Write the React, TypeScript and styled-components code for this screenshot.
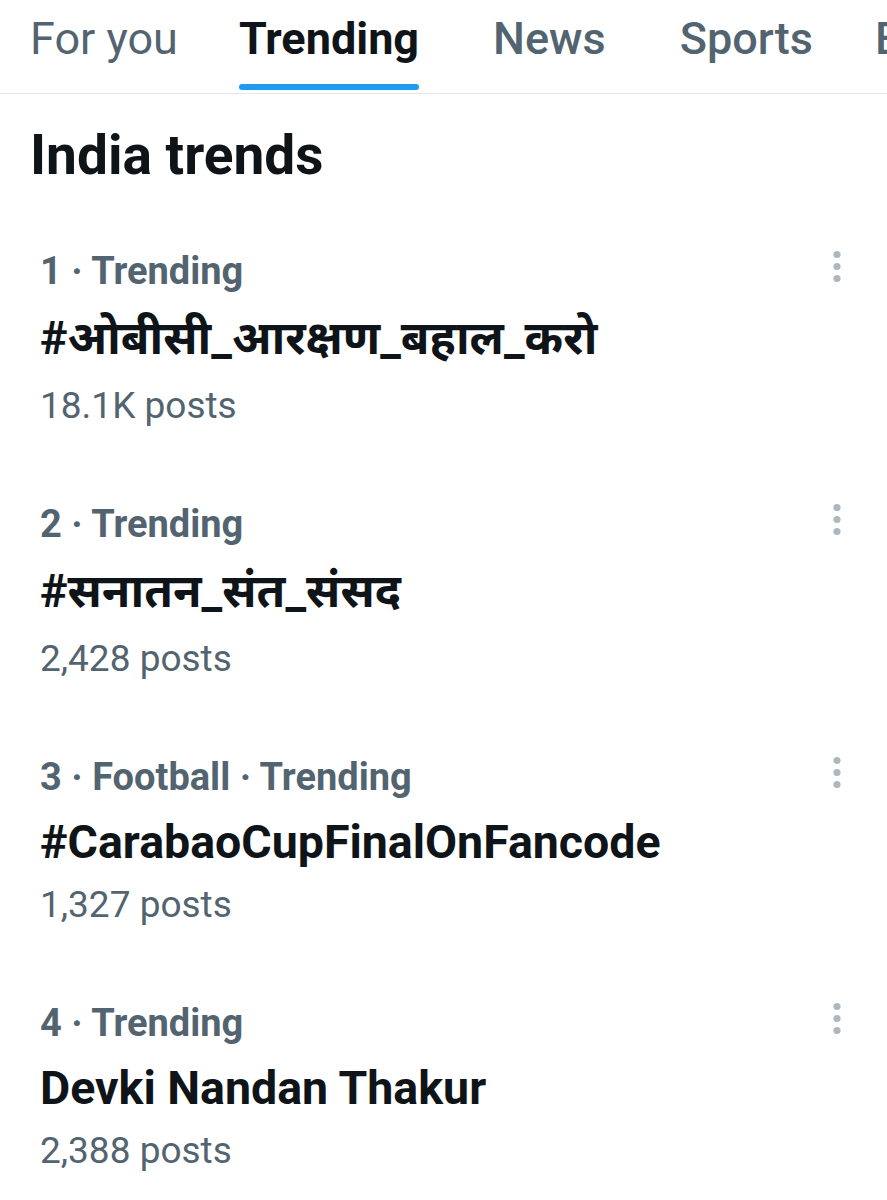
import React from "react";
import styled, { createGlobalStyle } from "styled-components";

const GlobalStyle = createGlobalStyle`
  html, body {
    margin: 0;
    padding: 0;
    background: #ffffff;
  }
  body {
    font-family: Roboto, "Noto Sans Devanagari", "Lohit Devanagari", "FreeSans", "Noto Sans", sans-serif;
    color: #0f1419;
    overflow: hidden;
  }
`;

const Page = styled.div`
  width: 887px;
  height: 1200px;
  background: #ffffff;
  overflow: hidden;
`;

const TabBar = styled.div`
  display: flex;
  padding-left: 30px;
  height: 93px;
  border-bottom: 1px solid #e3e8eb;
  white-space: nowrap;
  overflow: hidden;
`;

const Tab = styled.div<{ $active?: boolean; $weight?: number; $space: number }>`
  display: flex;
  flex-direction: column;
  flex-shrink: 0;
  margin-left: ${({ $space }) => $space}px;
  padding-top: 12px;
  font-size: 45px;
  line-height: 54px;
  font-weight: ${({ $active, $weight }) => ($active ? 700 : $weight ?? 500)};
  color: ${({ $active }) => ($active ? "#0f1419" : "#536471")};
`;

const Underline = styled.div<{ $show?: boolean }>`
  margin-top: 18px;
  height: 6px;
  border-radius: 3px;
  background: ${({ $show }) => ($show ? "#1d9bf0" : "transparent")};
`;

const Heading = styled.h2`
  margin: 29px 0 24px;
  padding-left: 30px;
  font-size: 55px;
  line-height: 64px;
  font-weight: 700;
  color: #0f1419;
`;

const Item = styled.div`
  display: flex;
  align-items: flex-start;
  padding: 36px 38px 35px 40px;
`;

const ItemBody = styled.div`
  flex: 1;
  display: flex;
  flex-direction: column;
`;

const Meta = styled.div`
  font-size: 38px;
  line-height: 48px;
  font-weight: 700;
  color: #536471;
`;

const Title = styled.div<{ $tall?: boolean }>`
  margin: ${({ $tall }) => ($tall ? "15px 0 17px" : "13px 0 12px")};
  font-size: 46.5px;
  line-height: 56px;
  font-weight: 700;
  color: #0f1419;
`;

const Posts = styled.div`
  font-size: 37px;
  line-height: 46px;
  font-weight: 400;
  color: #536471;
`;

const MoreButton = styled.div`
  width: 24px;
  height: 40px;
  flex-shrink: 0;
`;

function MoreIcon() {
  return (
    <svg width="24" height="40" viewBox="0 0 24 40">
      <circle cx="12" cy="7.5" r="3.6" fill="#aeb7bf" />
      <circle cx="12" cy="19.5" r="3.6" fill="#aeb7bf" />
      <circle cx="12" cy="31.5" r="3.6" fill="#aeb7bf" />
    </svg>
  );
}

const tabs = [
  { label: "For you", weight: 400, space: 0 },
  { label: "Trending", active: true, space: 61 },
  { label: "News", space: 74 },
  { label: "Sports", space: 74 },
  { label: "Entertainment", space: 62 },
];

const trends = [
  { meta: "1 · Trending", title: "#ओबीसी_आरक्षण_बहाल_करो", posts: "18.1K posts", tall: true },
  { meta: "2 · Trending", title: "#सनातन_संत_संसद", posts: "2,428 posts", tall: true },
  { meta: "3 · Football · Trending", title: "#CarabaoCupFinalOnFancode", posts: "1,327 posts" },
  { meta: "4 · Trending", title: "Devki Nandan Thakur", posts: "2,388 posts" },
];

export default function App() {
  return (
    <Page>
      <GlobalStyle />
      <TabBar>
        {tabs.map((t) => (
          <Tab key={t.label} $active={t.active} $weight={t.weight} $space={t.space}>
            {t.label}
            <Underline $show={t.active} />
          </Tab>
        ))}
      </TabBar>
      <Heading>India trends</Heading>
      {trends.map((t) => (
        <Item key={t.meta}>
          <ItemBody>
            <Meta>{t.meta}</Meta>
            <Title $tall={t.tall}>{t.title}</Title>
            <Posts>{t.posts}</Posts>
          </ItemBody>
          <MoreButton>
            <MoreIcon />
          </MoreButton>
        </Item>
      ))}
    </Page>
  );
}
